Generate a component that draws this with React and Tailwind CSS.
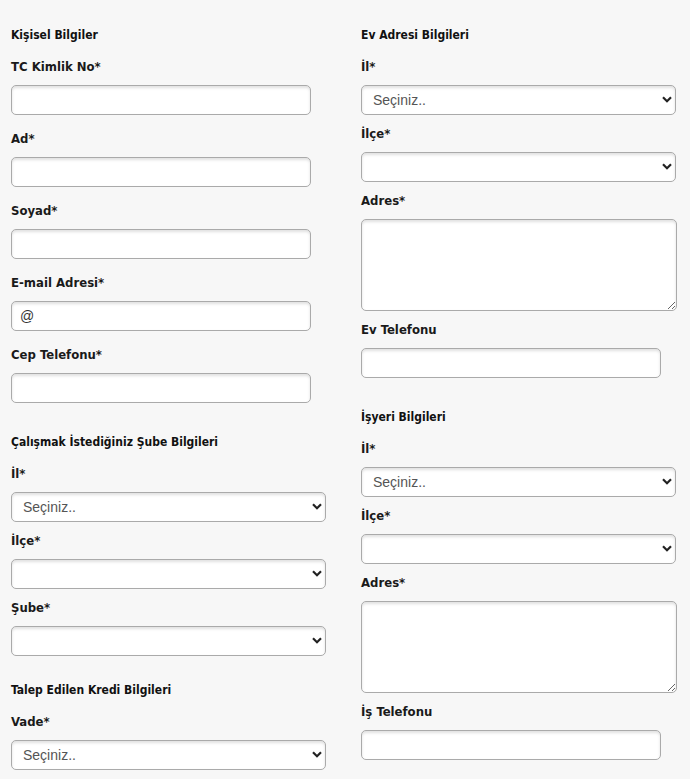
import React from 'react';

const labelFont = { fontFamily: '"DejaVu Sans Condensed", "DejaVu Sans", sans-serif' };

function SectionTitle({ children, className = '' }) {
  return (
    <div className={`h-4 leading-4 text-[12px] font-bold text-[#111] mb-[14px] ${className}`} style={labelFont}>
      {children}
    </div>
  );
}

function Label({ children }) {
  return (
    <label className="block h-5 leading-5 text-[13px] font-bold text-[#1a1a1a] mb-[8px]" style={labelFont}>
      {children}
    </label>
  );
}

const fieldBase =
  'block bg-white border border-[#aaa] rounded-[5px] shadow-[inset_0_2px_3px_rgba(0,0,0,0.12)] outline-none';

function TextField({ label, value = '', className = 'mb-[14px]' }) {
  return (
    <div className={className}>
      <Label>{label}</Label>
      <input
        type="text"
        defaultValue={value}
        className={`${fieldBase} w-[300px] h-[30px] px-2 text-[14px] text-[#333]`}
        style={{ fontFamily: '"Liberation Sans", Arial, sans-serif' }}
      />
    </div>
  );
}

function SelectField({ label, placeholder = '', className = 'mb-[9px]' }) {
  return (
    <div className={className}>
      <Label>{label}</Label>
      <div className="relative w-[315px] h-[30px]">
        <select
          defaultValue=""
          className={`${fieldBase} appearance-none w-full h-full pl-[11px] pr-8 text-[14px] text-[#555] rounded-[5px] shadow-[0_1px_1px_rgba(0,0,0,0.08)]`}
          style={{ fontFamily: '"Liberation Sans", Arial, sans-serif' }}
        >
          <option value="">{placeholder}</option>
        </select>
        <svg
          className="absolute right-[4px] top-[11px] pointer-events-none"
          width="10"
          height="7"
          viewBox="0 0 10 7"
        >
          <path d="M1 1.2 L5 5.2 L9 1.2" fill="none" stroke="#222" strokeWidth="2.2" />
        </svg>
      </div>
    </div>
  );
}

function AreaField({ label }) {
  return (
    <div className="mb-[9px]">
      <Label>{label}</Label>
      <textarea className={`${fieldBase} w-[316px] h-[92px] p-2 text-[14px]`} />
    </div>
  );
}

export default function App() {
  return (
    <div className="h-[779px] bg-[#f7f7f7] overflow-hidden">
      <div className="grid grid-cols-[350px_329px] pl-[11px] pt-[27px]">
        <div>
          <SectionTitle className="mb-[13px]">Kişisel Bilgiler</SectionTitle>
          <TextField label="TC Kimlik No*" />
          <TextField label="Ad*" />
          <TextField label="Soyad*" />
          <TextField label="E-mail Adresi*" value="@" />
          <TextField label="Cep Telefonu*" className="mb-[31px]" />

          <SectionTitle>Çalışmak İstediğiniz Şube Bilgileri</SectionTitle>
          <SelectField label="İl*" placeholder="Seçiniz.." />
          <SelectField label="İlçe*" />
          <SelectField label="Şube*" className="mb-[26px]" />

          <SectionTitle>Talep Edilen Kredi Bilgileri</SectionTitle>
          <SelectField label="Vade*" placeholder="Seçiniz.." />
        </div>

        <div>
          <SectionTitle className="mb-[13px]">Ev Adresi Bilgileri</SectionTitle>
          <SelectField label="İl*" placeholder="Seçiniz.." />
          <SelectField label="İlçe*" />
          <AreaField label="Adres*" />
          <TextField label="Ev Telefonu" className="mb-[31px]" />

          <SectionTitle>İşyeri Bilgileri</SectionTitle>
          <SelectField label="İl*" placeholder="Seçiniz.." />
          <SelectField label="İlçe*" />
          <AreaField label="Adres*" />
          <TextField label="İş Telefonu" className="mb-[17px]" />
          <SectionTitle>Çalışma Bilgileri</SectionTitle>
        </div>
      </div>
    </div>
  );
}
